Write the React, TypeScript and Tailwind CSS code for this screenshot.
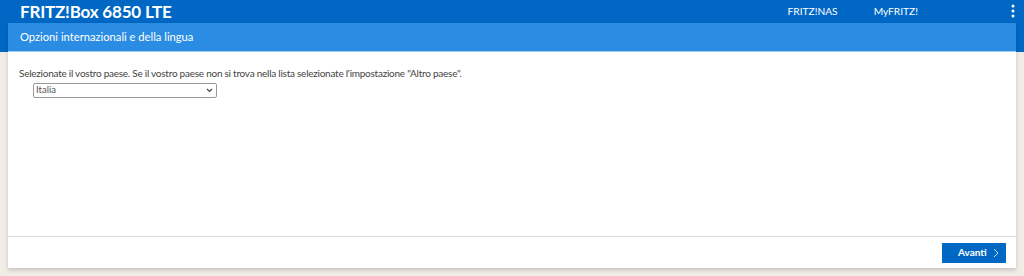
const App = () => {
  return (
    <div className="w-[1024px] h-[276px] bg-[#f0ede7] overflow-hidden font-['Lato','Liberation_Sans',sans-serif]">
      <div className="bg-[#0068c4] h-[52px]">
        <div className="h-[23px] flex items-center pl-[20px] pr-[8px]">
          <span className="text-white font-bold text-[17px] leading-none tracking-[-0.2px]">FRITZ!Box 6850 LTE</span>
          <div className="ml-auto flex items-center text-white text-[10.2px]">
            <span className="mr-[36px]">FRITZ!NAS</span>
            <span className="mr-[93px]">MyFRITZ!</span>
            <svg width="4" height="14" viewBox="0 0 4 14" className="mr-[1px]">
              <circle cx="2" cy="2" r="1.5" fill="#fff" />
              <circle cx="2" cy="7" r="1.5" fill="#fff" />
              <circle cx="2" cy="12" r="1.5" fill="#fff" />
            </svg>
          </div>
        </div>
      </div>

      <div className="-mt-[29px] mx-[8px] bg-white shadow-[0_2px_4px_rgba(0,0,0,0.18)] flex flex-col h-[245px]">
        <div className="h-[29px] bg-[#2a8ce2] flex items-center pl-[12px] border-b border-[#9fcdf2]">
          <span className="text-white text-[11.2px]">Opzioni internazionali e della lingua</span>
        </div>

        <div className="flex-1 pt-[14px] pl-[11px] border-b border-[#dcdcdc]">
          <p className="text-[#444] text-[10px] leading-[14px] tracking-[-0.25px]">
            Selezionate il vostro paese. Se il vostro paese non si trova nella lista selezionate l'impostazione "Altro paese".
          </p>
          <div className="mt-[3px] ml-[14px] w-[184px] h-[15px] border border-[#999] rounded-[2px] flex items-center px-[2px] text-[9.5px] text-[#555]">
            <span>Italia</span>
            <svg width="7" height="5" viewBox="0 0 7 5" className="ml-auto mr-[1px]">
              <path d="M1 1l2.5 2.5L6 1" stroke="#444" strokeWidth="1.2" fill="none" />
            </svg>
          </div>
        </div>

        <div className="h-[31px] flex items-center justify-end pr-[10px]">
          <button className="w-[64px] h-[20px] bg-[#0068c4] text-white text-[10px] font-bold flex items-center pl-[16px]">
            <span>Avanti</span>
            <svg width="6" height="10" viewBox="0 0 6 10" className="ml-[6px]">
              <path d="M1 1l4 4-4 4" stroke="#c9def3" strokeWidth="1" fill="none" />
            </svg>
          </button>
        </div>
      </div>
    </div>
  )
}

export default App
